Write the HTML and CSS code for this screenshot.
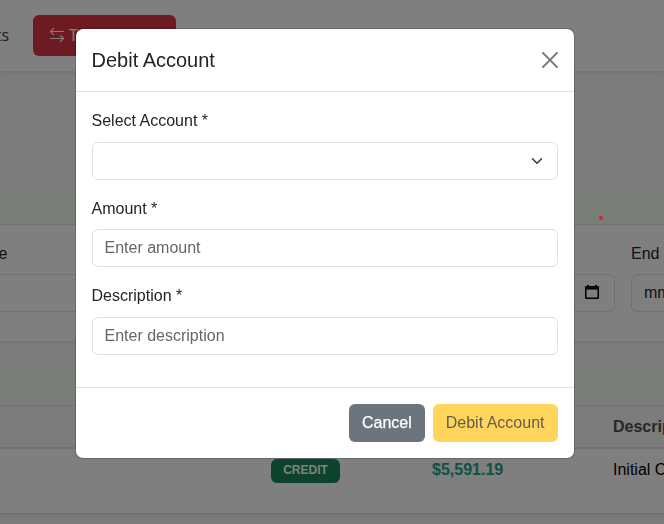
FILE: index.html
```html
<!DOCTYPE html>
<html lang="en">
<head>
<meta charset="utf-8">
<title>Debit Account</title>
<link rel="stylesheet" href="styles.css">
</head>
<body>
<nav class="navbar">
  <span class="nav-link">ts</span>
  <span class="nav-active">
    <svg width="16" height="16" viewBox="0 0 16 16" fill="none" stroke="currentColor" stroke-width="1.2" stroke-linecap="round" stroke-linejoin="round"><path d="M14.500 4.500H1.500M4.700 1.300 1.500 4.500 4.700 7.700M1.500 11.500h13M11.300 8.300l3.200 3.200-3.200 3.200"/></svg>
    <span>Transactions</span>
  </span>
</nav>
<main>
  <section class="card filters">
    <div class="card-header"></div>
    <div class="filter-row">
      <div class="filter"><div class="filter-label">e</div><div class="date start"><svg class="cal" width="14" height="15" viewBox="0 0 14 15"><path fill="currentColor" fill-rule="evenodd" d="M2 0h2v1h6V0h2v1h1q1 0 1 1v11q0 1-1 1H1q-1 0-1-1V2q0-1 1-1h1zM1.500 4.500v8h11v-8z"/></svg></div></div>
      <div class="filter"><div class="filter-label">End Date</div><div class="date">mm/dd/yyyy</div></div>
    </div>
  </section>
  <section class="card">
    <div class="card-header short"></div>
    <div class="row head"><span></span><span></span><span></span><span>Description</span></div>
    <div class="row"><span></span><span class="type"><b class="badge">CREDIT</b></span><span class="money">$5,591.19</span><span>Initial Credit</span></div>
  </section>
</main>
<div class="backdrop"></div>
<i class="dot"></i>
<div class="modal">
  <header class="modal-header">
    <h5>Debit Account</h5>
    <svg class="close" width="16" height="16" viewBox="0 0 16 16"><path d="M.293.293a1 1 0 0 1 1.414 0L8 6.586 14.293.293a1 1 0 1 1 1.414 1.414L9.414 8l6.293 6.293a1 1 0 0 1-1.414 1.414L8 9.414l-6.293 6.293a1 1 0 0 1-1.414-1.414L6.586 8 .293 1.707a1 1 0 0 1 0-1.414z"/></svg>
  </header>
  <div class="modal-body">
    <div class="field"><div class="label">Select Account *</div><div class="control select"><svg width="16" height="12" viewBox="0 0 16 16"><path fill="none" stroke="#343a40" stroke-linecap="round" stroke-linejoin="round" stroke-width="2" d="m2 5 6 6 6-6"/></svg></div></div>
    <div class="field"><div class="label">Amount *</div><input class="control" placeholder="Enter amount"></div>
    <div class="field"><div class="label">Description *</div><input class="control" placeholder="Enter description"></div>
  </div>
  <footer class="modal-footer">
    <button class="btn cancel">Cancel</button>
    <button class="btn debit">Debit Account</button>
  </footer>
</div>
</body>
</html>
```
FILE: styles.css
```css
* { box-sizing: border-box; }
body {
  margin: 0;
  height: 524px;
  overflow: hidden;
  background: #f8f8fa;
  color: #212529;
  font: 16px/1.6 "Liberation Sans", Arial, sans-serif;
}
.navbar {
  display: flex;
  align-items: center;
  gap: 24px;
  height: 71px;
  background: #fff;
  box-shadow: 0 2px 4px rgba(0, 0, 0, .08);
  font-family: "Open Sans", sans-serif;
}
.nav-link {
  display: flex;
  justify-content: flex-end;
  width: 9px;
  color: #2c3e50;
}
.nav-active {
  display: flex;
  align-items: center;
  gap: 4px;
  width: 143px;
  height: 41px;
  padding: 0 16px;
  border-radius: 6px;
  background: #dc3545;
  color: #fff;
}
.nav-active svg {
  flex: none;
  transform: translateY(-1px);
}
main {
  display: flex;
  flex-direction: column;
  gap: 24px;
  padding-top: 112px;
}
.card {
  background: #fff;
  box-shadow: 0 2px 4px rgba(0, 0, 0, .08);
}
.card-header {
  height: 42px;
  border-bottom: 1px solid #dfe1df;
  background: #f2fef0;
}
.card-header.short { height: 41px; }
.filters { height: 158px; }
.filter-row {
  display: grid;
  grid-template-columns: 615px 33px;
  gap: 16px;
  padding-top: 16px;
  overflow: hidden;
}
.filter { min-width: 0; }
.filter:first-child .filter-label { margin-left: -1.5px; }
.filter-label {
  margin-bottom: 7px;
  line-height: 25.6px;
  white-space: nowrap;
}
.date {
  display: flex;
  align-items: center;
  height: 38px;
  padding: 0 12px;
  border: 1px solid #dee2e6;
  border-radius: 6px;
}
.filter:last-child .date {
  border-right: 0;
  border-radius: 6px 0 0 6px;
}
.date.start {
  justify-content: flex-end;
  padding-right: 15px;
  border-left: 0;
  border-radius: 0 6px 6px 0;
}
.cal { color: #000; }
.row {
  display: grid;
  grid-template-columns: 271px 161px 181px 51px;
  height: 65px;
  padding-top: 8px;
  border-bottom: 1px solid #dee2e6;
  color: #000;
  white-space: nowrap;
}
.row > span:last-child { overflow: hidden; }
.row.head {
  height: 43px;
  padding-top: 8px;
  border-bottom: 2px solid #dee2e6;
  background: #f8f9fa;
  color: #495057;
  font-weight: bold;
}
.type {
  display: flex;
  align-items: flex-start;
  padding-top: 2px;
}
.badge {
  display: flex;
  align-items: center;
  justify-content: center;
  width: 69px;
  height: 24px;
  border-radius: 6px;
  background: #198754;
  color: #fff;
  font-size: 12px;
}
.money {
  color: #20a090;
  font-weight: bold;
}
.backdrop {
  position: fixed;
  inset: 0;
  background: rgba(0, 0, 0, .5);
}
.dot {
  position: absolute;
  left: 599px;
  top: 216px;
  width: 4px;
  height: 4px;
  border-radius: 50%;
  background: #ed1c24;
}
.modal {
  position: absolute;
  top: 28px;
  left: 75px;
  width: 500px;
  border: 1px solid rgba(0, 0, 0, .176);
  border-radius: 8px;
  background: #fff;
  background-clip: padding-box;
}
.modal-header {
  display: flex;
  align-items: center;
  justify-content: space-between;
  padding: 16px 16px 16px 15.5px;
  border-bottom: 1px solid #dee2e6;
}
h5 {
  margin: 0;
  font-size: 20px;
  font-weight: 400;
  line-height: 30px;
}
.close { opacity: .5; }
.modal-body { padding: 16px; }
.field { margin-bottom: 16px; }
.label { margin: 0 0 8px -.5px; }
.control {
  display: flex;
  align-items: center;
  width: 100%;
  height: 38px;
  padding: 6px 12px 6px 11.5px;
  border: 1px solid #dee2e6;
  border-radius: 6px;
  background: #fff;
  font: inherit;
  line-height: 24px;
}
.control::placeholder { color: #646769; opacity: 1; }
.select { justify-content: flex-end; }
.modal-footer {
  display: flex;
  justify-content: flex-end;
  gap: 8px;
  padding: 16px;
  border-top: 1px solid #dee2e6;
}
.btn {
  height: 38px;
  padding: 6px 12.5px 6px 11.5px;
  border: 1px solid transparent;
  border-radius: 6px;
  font: inherit;
  line-height: 24px;
}
.cancel { background: #6c757d; color: #fff; -webkit-text-stroke: .25px #fff; }
.debit { background: #ffd55e; color: #665d4a; }
```
